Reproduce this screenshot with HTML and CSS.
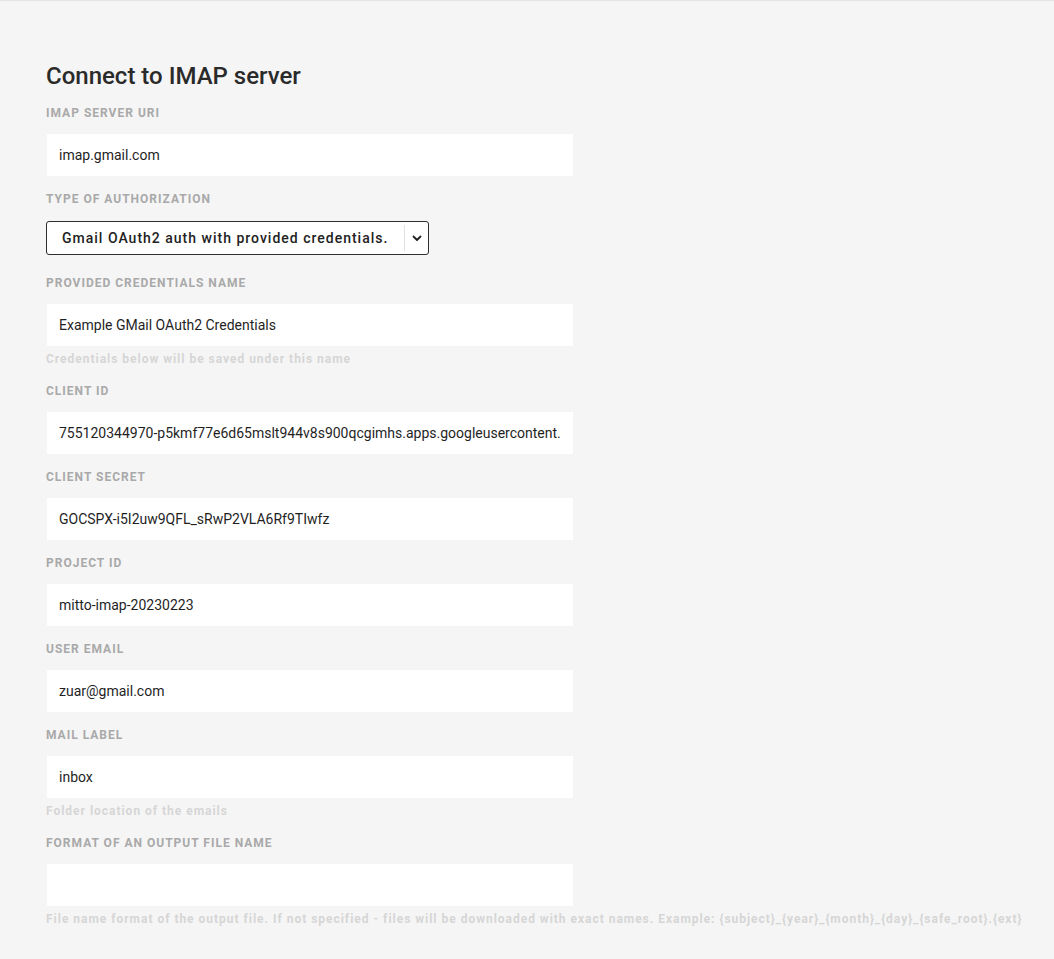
FILE: index.html
```html
<!DOCTYPE html>
<html lang="en">
<head>
<meta charset="utf-8">
<title>Connect to IMAP server</title>
<link rel="stylesheet" href="styles.css">
</head>
<body>
<main class="page">
  <h1 class="title">Connect to IMAP server</h1>

  <div class="field">
    <label class="label">IMAP SERVER URI</label>
    <input class="input" type="text" value="imap.gmail.com">
  </div>

  <div class="field field-select">
    <label class="label">TYPE OF AUTHORIZATION</label>
    <div class="select">
      <span class="select-text">Gmail OAuth2 auth with provided credentials.</span>
      <span class="select-arrow">
        <svg width="10" height="7" viewBox="0 0 10 7"><path d="M1.5 1.5 L5 5 L8.5 1.5" fill="none" stroke="#222" stroke-width="1.8" stroke-linecap="round" stroke-linejoin="round"/></svg>
      </span>
    </div>
  </div>

  <div class="field field-help">
    <label class="label">PROVIDED CREDENTIALS NAME</label>
    <input class="input" type="text" value="Example GMail OAuth2 Credentials">
    <p class="help">Credentials below will be saved under this name</p>
  </div>

  <div class="field">
    <label class="label">CLIENT ID</label>
    <input class="input" type="text" value="755120344970-p5kmf77e6d65mslt944v8s900qcgimhs.apps.googleusercontent.com">
  </div>

  <div class="field">
    <label class="label">CLIENT SECRET</label>
    <input class="input" type="text" value="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">
  </div>

  <div class="field">
    <label class="label">PROJECT ID</label>
    <input class="input" type="text" value="mitto-imap-20230223">
  </div>

  <div class="field">
    <label class="label">USER EMAIL</label>
    <input class="input" type="text" value="zuar@gmail.com">
  </div>

  <div class="field field-help">
    <label class="label">MAIL LABEL</label>
    <input class="input" type="text" value="inbox">
    <p class="help">Folder location of the emails</p>
  </div>

  <div class="field field-help">
    <label class="label">FORMAT OF AN OUTPUT FILE NAME</label>
    <input class="input" type="text" value="">
    <p class="help">File name format of the output file. If not specified - files will be downloaded with exact names. Example: {subject}_{year}_{month}_{day}_{safe_root}.{ext}</p>
  </div>
</main>
</body>
</html>
```

FILE: styles.css
```css
html, body {
  margin: 0;
  padding: 0;
  background: #f5f5f5;
  height: 100%;
}

body {
  font-family: Roboto, "Liberation Sans", Arial, sans-serif;
  color: #222;
}

.page {
  border-top: 1px solid #e4e4e4;
  padding: 61px 0 0 46px;
  display: flex;
  flex-direction: column;
  align-items: flex-start;
}

.title {
  margin: 0;
  font-size: 24px;
  line-height: 28px;
  font-weight: 500;
  color: #2a2a2a;
}

.field {
  display: flex;
  flex-direction: column;
  align-items: flex-start;
  margin-top: 15px;
}

.field + .field {
  margin-top: 15px;
}

.field-select + .field {
  margin-top: 20px;
}

.field-help + .field {
  margin-top: 16px;
}

.label {
  display: block;
  font-size: 12px;
  line-height: 16px;
  font-weight: 700;
  letter-spacing: 1px;
  color: #a9a9a9;
  margin-bottom: 13px;
}

.field-select .label {
  margin-bottom: 14px;
}

.input {
  box-sizing: border-box;
  width: 528px;
  height: 44px;
  margin: -1px 0;
  border: 1px solid #f5f5f5;
  background: #fff;
  padding: 0 12px;
  font-family: Roboto, "Liberation Sans", Arial, sans-serif;
  font-size: 14px;
  color: #1f1f1f;
  outline: none;
}

.select {
  box-sizing: border-box;
  width: 383px;
  height: 34px;
  border: 1px solid #2e2e2e;
  border-radius: 3px;
  background: #fff;
  display: flex;
  align-items: stretch;
}

.select-text {
  flex: 1;
  display: flex;
  align-items: center;
  padding-left: 15px;
  font-size: 14px;
  font-weight: 500;
  letter-spacing: 1px;
  color: #222;
  white-space: nowrap;
}

.select-arrow {
  width: 23px;
  margin: 3px 0;
  border-left: 1px solid #e2e2e2;
  display: flex;
  align-items: center;
  justify-content: center;
}

.help {
  margin: 5px 0 0;
  font-size: 12px;
  line-height: 16px;
  font-weight: 700;
  letter-spacing: 0.98px;
  color: #d6d6d6;
  white-space: nowrap;
}
```
